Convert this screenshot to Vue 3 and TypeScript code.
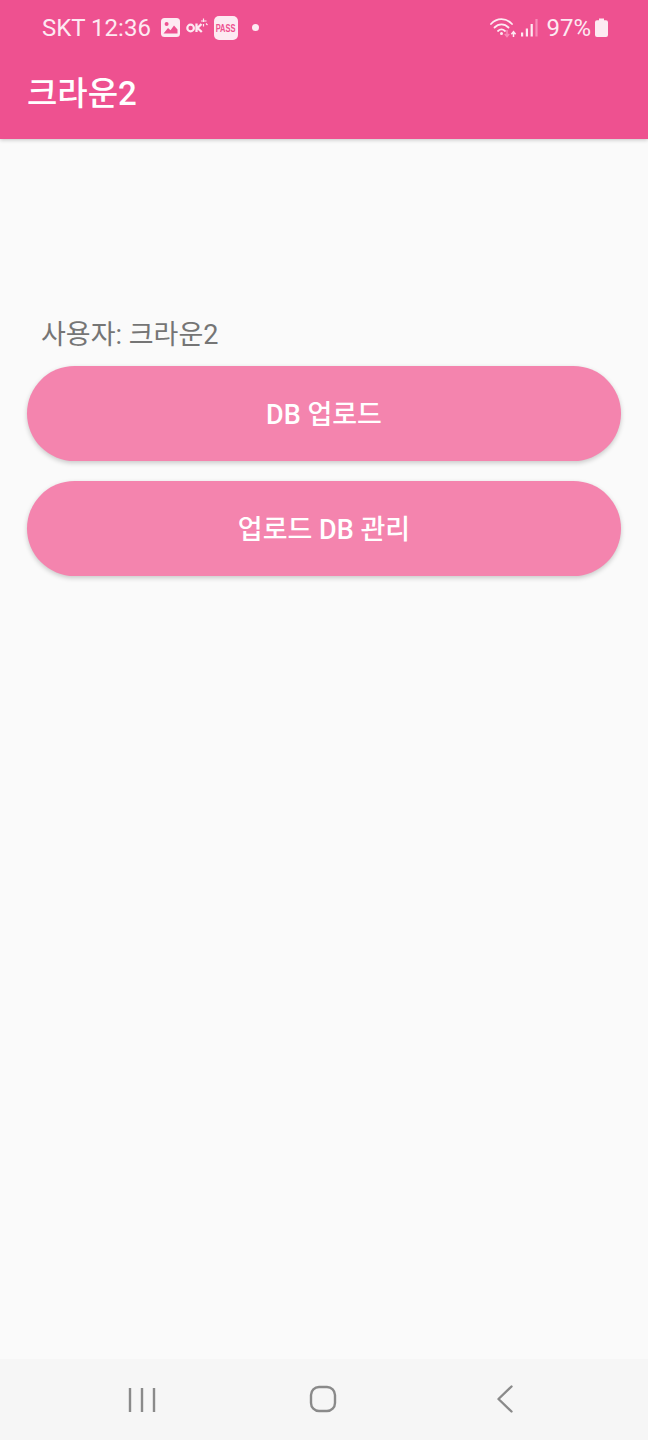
<script setup lang="ts">
const label = '사용자: 크라운2'
const actions: string[] = ['DB 업로드', '업로드 DB 관리']
</script>

<template>
  <div class="screen">
    <header class="appbar">
      <div class="status">
        <div class="status-left">
          <span class="clock">SKT 12:36</span>
          <svg class="ic-image" width="19" height="19" viewBox="0 0 19 19">
            <rect width="19" height="19" rx="3.5" fill="#fdeaf2" />
            <circle cx="5.6" cy="6" r="2" fill="#ee5190" />
            <path d="M2.5 15.5 L7 10 L9.5 12.2 L13 7.5 L16.5 11.5 V15.5 Z" fill="#ee5190" />
          </svg>
          <svg class="ic-ok" width="22" height="16" viewBox="0 0 22 16">
            <circle cx="4.6" cy="10" r="3.3" fill="none" stroke="#fdeaf2" stroke-width="2.2" />
            <path d="M10.5 5.5 V14 M15.5 6 L11.5 10 L15.8 14" fill="none" stroke="#fdeaf2" stroke-width="2.3" />
            <path d="M17.5 0.5 V4 M15 3 H20.5 M17.5 6 V8.5 M20 5.5 L21.5 7" fill="none" stroke="#fdeaf2" stroke-width="1.2" />
          </svg>
          <span class="pass"><span class="pass-text">PASS</span></span>
          <span class="dot"></span>
        </div>
        <div class="status-right">
          <svg class="ic-wifi" width="27" height="22" viewBox="0 0 27 22">
            <g fill="none" stroke="#fdeaf2" stroke-width="1.8" stroke-linecap="round">
              <path d="M1 7 C7 0.6 16 0.6 22 7" />
              <path d="M4.5 10.5 C8.5 6.4 14.5 6.4 18.5 10.5" />
              <path d="M8 14 C10.2 12 12.8 12 15 14" />
            </g>
            <circle cx="11.5" cy="16.6" r="1.5" fill="#fdeaf2" />
            <path d="M17 13 V19 M14.8 17 L17 19.6 L19.2 17" fill="none" stroke="#f98ab8" stroke-width="1.5" />
            <path d="M23.5 20 V15 M21.4 17.2 L23.5 14.6 L25.6 17.2" fill="none" stroke="#fdeaf2" stroke-width="1.5" />
          </svg>
          <svg class="ic-signal" width="17" height="20" viewBox="0 0 17 20">
            <rect x="0" y="14.5" width="2.2" height="4" fill="#fdeaf2" />
            <rect x="4.8" y="10.5" width="2.2" height="8" fill="#fdeaf2" />
            <rect x="9.6" y="6" width="2.2" height="12.5" fill="#fdeaf2" />
            <rect x="14.4" y="1" width="2.2" height="17.5" fill="#f98ab8" />
          </svg>
          <span class="battery-pct">97%</span>
          <svg class="ic-battery" width="13" height="19" viewBox="0 0 13 19">
            <path d="M4 0.5 H9 V2.2 H11 Q13 2.2 13 4.2 V17 Q13 19 11 19 H2 Q0 19 0 17 V4.2 Q0 2.2 2 2.2 H4 Z" fill="#fdeaf2" />
          </svg>
        </div>
      </div>
      <div class="toolbar">크라운2</div>
    </header>

    <main class="content">
      <p class="user">{{ label }}</p>
      <div class="actions">
        <button v-for="action in actions" :key="action" class="pill" type="button">
          <span class="pill-text">{{ action }}</span>
        </button>
      </div>
    </main>

    <nav class="navbar">
      <svg width="28" height="26" viewBox="0 0 28 26">
        <path d="M2 1 V25 M14 1 V25 M26 1 V25" fill="none" stroke="#8a8a8a" stroke-width="2.4" />
      </svg>
      <svg class="nav-home" width="28" height="28" viewBox="0 0 28 28">
        <rect x="2" y="2" width="24" height="24" rx="8" fill="none" stroke="#8a8a8a" stroke-width="2.4" />
      </svg>
      <svg class="nav-back" width="18" height="28" viewBox="0 0 18 28">
        <path d="M15.5 1.5 L2.5 14 L15.5 26.5" fill="none" stroke="#8a8a8a" stroke-width="2.4" stroke-linecap="round" stroke-linejoin="round" />
      </svg>
    </nav>
  </div>
</template>

<style scoped>
.screen {
  width: 648px;
  height: 1440px;
  display: flex;
  flex-direction: column;
  background: #fafafa;
  font-family: Roboto, "Noto Sans CJK KR", sans-serif;
  overflow: hidden;
}
.appbar {
  height: 139px;
  flex: none;
  background: #ee5190;
  box-shadow: 0 1px 4px rgba(0, 0, 0, 0.22);
  color: #fff;
  position: relative;
}
.status {
  height: 55px;
  display: flex;
  justify-content: space-between;
  align-items: center;
  padding: 0 40px 0 42px;
  color: #fdeaf2;
}
.status-left,
.status-right {
  display: flex;
  align-items: center;
}
.clock {
  font-size: 24px;
  white-space: nowrap;
}
.ic-image {
  margin-left: 10px;
}
.ic-ok {
  margin-left: 6px;
  margin-top: -3px;
}
.pass {
  margin-left: 6px;
  width: 24px;
  height: 24px;
  border-radius: 5px;
  background: #fdeaf2;
  color: #ee5190;
  display: flex;
  align-items: center;
  justify-content: center;
  overflow: hidden;
}
.pass-text {
  font-family: "Liberation Sans", sans-serif;
  font-size: 11px;
  font-weight: 700;
  transform: scaleX(0.68);
}
.dot {
  width: 7px;
  height: 7px;
  border-radius: 50%;
  background: #fdeaf2;
  margin-left: 14px;
}
.ic-signal {
  margin-left: 4px;
}
.battery-pct {
  font-size: 24px;
  margin-left: 8px;
}
.ic-battery {
  margin-left: 4px;
}
.toolbar {
  padding: 0 0 0 27px;
  font-size: 33px;
  font-weight: 500;
  line-height: 78px;
}
.content {
  flex: 1;
  padding: 178px 27px 0;
}
.user {
  margin: 0;
  padding-left: 14px;
  font-size: 27px;
  line-height: 36px;
  color: #757575;
}
.actions {
  display: flex;
  flex-direction: column;
  gap: 20px;
  margin-top: 13px;
}
.pill {
  height: 95px;
  border: 0;
  padding: 0 0 3px;
  border-radius: 48px;
  background: #f484ae;
  color: #fff;
  font-family: inherit;
  font-size: 27px;
  font-weight: 500;
  box-shadow: 0 2px 5px rgba(0, 0, 0, 0.2);
}
.navbar {
  height: 81px;
  flex: none;
  background: #f6f6f6;
  display: flex;
  align-items: center;
  padding: 0 0 0 128px;
}
.nav-home {
  margin-left: 153px;
  margin-top: -1px;
}
.nav-back {
  margin-left: 159px;
  margin-top: -1px;
}
</style>
